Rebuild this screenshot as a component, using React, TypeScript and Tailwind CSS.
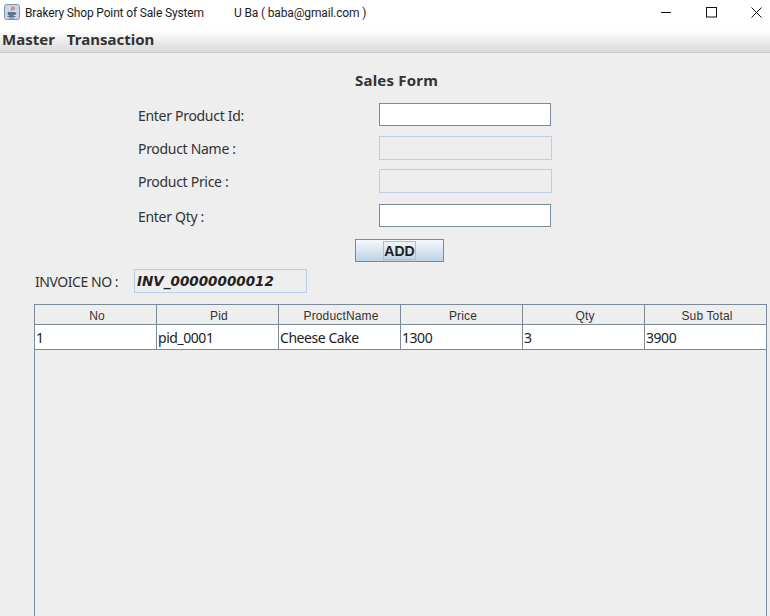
const columns = ["No", "Pid", "ProductName", "Price", "Qty", "Sub Total"];
const row = ["1", "pid_0001", "Cheese Cake", "1300", "3", "3900"];

const uiFont = "font-['Noto_Sans',sans-serif]";

function JavaIcon() {
    return (
        <svg width="16" height="16" viewBox="0 0 16 16" className="shrink-0">
            <rect x="0.5" y="0.5" width="15" height="15" rx="2" fill="#c9d8e8" stroke="#7d93ab"/>
            <path d="M8 2.500c1.500 1.500-1.500 2.500 0 4M10 3c.8 1-.8 1.800 0 3" fill="none" stroke="#d9642a" strokeWidth="1.200"/>
            <path d="M4 8.500h6.500v1.500c0 1-1 1.500-3 1.500s-3.500-.5-3.500-1.500zM10.500 9h1.500v1h-1.500" fill="#5a7390" stroke="#4a6078" strokeWidth=".6"/>
            <path d="M3.500 12.500h8M5 14h5" stroke="#5a7390" strokeWidth="1"/>
        </svg>
    );
}

function TitleBar() {
    return (
        <div className="flex h-[30px] items-center bg-white pb-[5px] font-['Roboto',sans-serif] text-[12px] tracking-[-0.15px] text-[#1c1c1c]">
            <div className="ml-[4px] mt-[4px] self-start"><JavaIcon/></div>
            <span className="ml-[5px] w-[209px] whitespace-nowrap">Brakery Shop Point of Sale System</span>
            <span className="whitespace-nowrap">U Ba ( baba@gmail.com )</span>
            <div className="ml-auto flex items-center">
                <svg width="10" height="11" viewBox="0 0 10 11" className="mr-[35px]"><path d="M0 5.500h10" stroke="#111" strokeWidth="1"/></svg>
                <svg width="11" height="11" viewBox="0 0 11 11" className="mr-[34px]"><rect x="0.500" y="0.500" width="10" height="9.500" fill="none" stroke="#111"/></svg>
                <svg width="11" height="11" viewBox="0 0 11 11" className="mr-[8px]"><path d="M.5.500l10 10M10.500.500l-10 10" stroke="#111" strokeWidth="1"/></svg>
            </div>
        </div>
    );
}

function MenuBar() {
    return (
        <div className={`flex h-[23px] items-center gap-[12px] border-b border-[#c9c9c9] bg-gradient-to-b from-white to-[#dadada] pb-[3px] pl-[2px] text-[15px] font-bold text-[#333333] ${uiFont}`}>
            <span>Master</span>
            <span>Transaction</span>
        </div>
    );
}

function FormRow({label, disabled, rowClass, labelClass}: {label: string; disabled?: boolean; rowClass: string; labelClass?: string}) {
    return (
        <div className={`flex items-center pl-[138px] ${rowClass}`}>
            <span className={`w-[241px] text-[14px] tracking-[-0.3px] text-[#333333] ${labelClass ?? ""}`}>{label}</span>
            {disabled ? (
                <div className="h-[24px] w-[173px] border border-[#b8cfe5] bg-[#eeeeee]"/>
            ) : (
                <div className="h-[23px] w-[172px] border border-[#7a8a99] bg-white"/>
            )}
        </div>
    );
}

function SalesTable() {
    return (
        <div className="ml-[34px] mr-[3px] mt-[11px] flex-1 border-x border-t border-[#7a8a99] text-[#333333]">
            <div className="grid h-[20px] grid-cols-[122px_122px_122px_122px_122px_1fr] border-b border-[#7a8a99] font-['Liberation_Sans',sans-serif] text-[12px] tracking-[0.15px]">
                {columns.map((c, i) => (
                    <div key={c} className={`flex items-center justify-center pl-[3px] pt-[2px] ${i < 5 ? "border-r border-[#7a8a99]" : ""}`}>{c}</div>
                ))}
            </div>
            <div className="grid h-[25px] grid-cols-[122px_122px_122px_122px_122px_1fr] border-b border-[#7a8a99] bg-white text-[14px] tracking-[-0.45px] text-[#222222]">
                {row.map((c, i) => (
                    <div key={i} className={`flex items-center pl-[1px] pt-[1px] ${i < 5 ? "border-r border-[#7a8a99]" : ""}`}>{c}</div>
                ))}
            </div>
        </div>
    );
}

export default function App() {
    return (
        <div className={`flex h-[616px] w-[770px] flex-col overflow-hidden bg-[#eeeeee] ${uiFont}`}>
            <TitleBar/>
            <MenuBar/>
            <div className="flex flex-1 flex-col">
                <h1 className="mt-[17px] pb-[1px] pl-[355px] text-[15px] leading-[20px] font-bold tracking-[0.2px] text-[#333333]">Sales Form</h1>
                <FormRow label="Enter Product Id:" rowClass="mt-[12px]" labelClass="pt-[2px]"/>
                <FormRow label="Product Name :" disabled rowClass="mt-[10px]"/>
                <FormRow label="Product Price :" disabled rowClass="mt-[9px]"/>
                <FormRow label="Enter Qty :" rowClass="mt-[11px]" labelClass="pt-[2px]"/>
                <div className="ml-[355px] mt-[12px] flex h-[23px] w-[89px] items-center justify-center border border-[#7a8a99] bg-gradient-to-b from-[#f6f9fc] to-[#bdd2e6]">
                    <span className="border border-[#a9c0d6] pt-[1px] font-['Liberation_Sans',sans-serif] text-[14px] leading-[16px] font-bold text-[#222222]">ADD</span>
                </div>
                <div className="mt-[7px] flex items-center pl-[35px]">
                    <span className="w-[99px] text-[14px] tracking-[-0.45px] text-[#333333]">INVOICE NO :</span>
                    <div className="flex h-[24px] w-[173px] items-center border border-[#b8cfe5] pl-[2px] font-['DejaVu_Sans',sans-serif] text-[13.5px] font-bold text-[#222222] italic">INV_00000000012</div>
                </div>
                <SalesTable/>
            </div>
        </div>
    );
}
